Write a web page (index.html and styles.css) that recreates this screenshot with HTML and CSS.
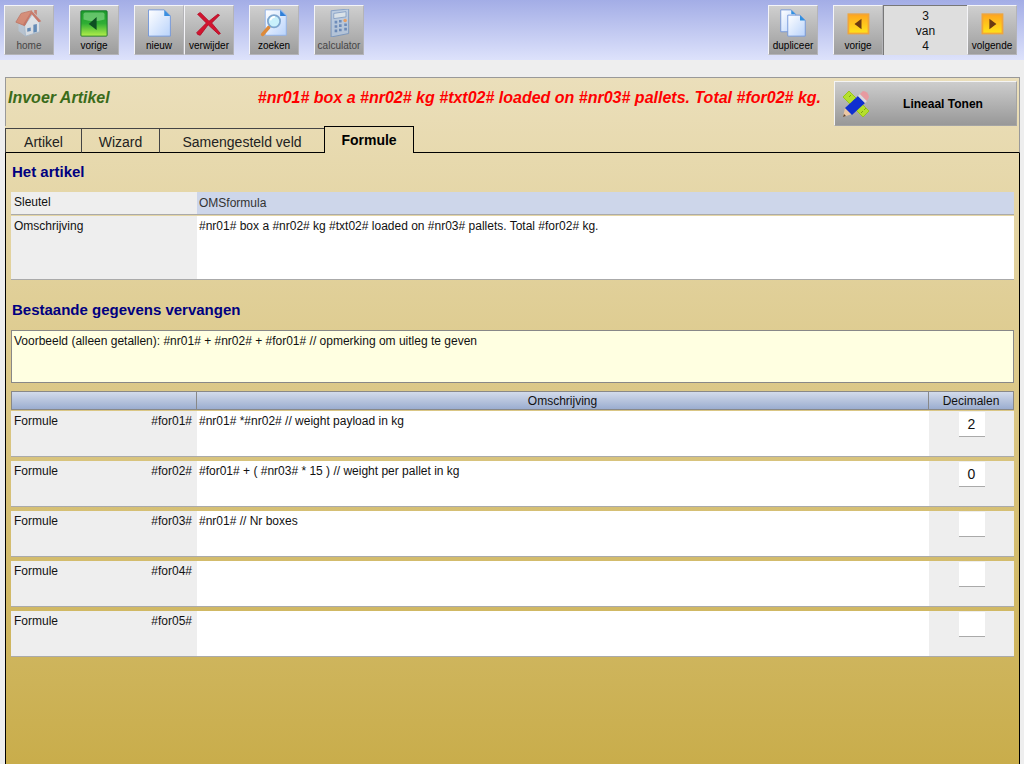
FILE: index.html
```html
<!DOCTYPE html>
<html lang="nl">
<head>
    <meta charset="UTF-8">
    <meta name="viewport" content="width=device-width, initial-scale=1.0">
    <title>Invoer Artikel</title>
    <link rel="stylesheet" href="styles.css">
</head>
<body>
    <header class="toolbar">
        <button type="button" class="tool" disabled>
            <svg viewBox="0 0 32 32">
                <path d="M4 15v10l8 6V18z" fill="#b9cde2"/>
                <path d="M11 19l9-13 8 9v11l-16 5z" fill="#f2f8ff" stroke="#9fbbd8"/>
                <path d="M1 15L7 5l12-3-8 17z" fill="#e06a48" stroke="#bb4a30"/>
                <path d="M19 2l11 12-3 1-8-9-8 13-2-1z" fill="#c94a30"/>
                <path d="M22 1h3v6l-3-3z" fill="#c8523a"/>
                <path d="M14 22l4-1v4l-4 1zM21 18l4-1v9l-4 1z" fill="#2f6fb6"/>
            </svg>
            <span>home</span>
        </button>
        <button type="button" class="tool gap">
            <svg viewBox="0 0 32 32">
                <defs>
                    <linearGradient id="green" x1="0" y1="0" x2="0" y2="1">
                        <stop offset="0" stop-color="#1d9a2c"/>
                        <stop offset="0.5" stop-color="#2fae34"/>
                        <stop offset="1" stop-color="#b4f04a"/>
                    </linearGradient>
                </defs>
                <rect x="1" y="2" width="30" height="29" rx="1" fill="url(#green)" stroke="#16702a"/>
                <path d="M4 6q0-2 2-2h20q2 0 2 2v6q-12 4-24 0z" fill="#8edb90" opacity="0.6"/>
                <path d="M19 9v15l-9-7z" fill="#0d4f22"/>
            </svg>
            <span>vorige</span>
        </button>
        <button type="button" class="tool gap">
            <svg viewBox="0 0 32 32">
                <defs>
                    <linearGradient id="paper" x1="0" y1="0" x2="1" y2="1">
                        <stop offset="0" stop-color="#ffffff"/>
                        <stop offset="1" stop-color="#b9d3fb"/>
                    </linearGradient>
                </defs>
                <path d="M4 1h18l7 7v23H4z" fill="url(#paper)" stroke="#6f93d8"/>
                <path d="M22 1v7h7z" fill="#3a8fe0"/>
            </svg>
            <span>nieuw</span>
        </button>
        <button type="button" class="tool">
            <svg viewBox="0 0 32 32">
                <path d="M3 6l3-2 10 10 10-8 2 1-9 9 10 12-2 1-12-11L6 30l-3-1-1-2 11-11z" fill="#d3142f" stroke="#b00d26" stroke-linejoin="round"/>
            </svg>
            <span>verwijder</span>
        </button>
        <button type="button" class="tool gap">
            <svg viewBox="0 0 32 32">
                <path d="M6 1h18l6 6v23H6z" fill="url(#paper)" stroke="#8fb2ea"/>
                <path d="M23 1v7h7z" fill="#2f7fd8"/>
                <path d="M3 29l7-8" stroke="#dd8a3a" stroke-width="4" stroke-linecap="round"/>
                <circle cx="16" cy="14" r="7" fill="#c9f0fb" stroke="#7fa6cf" stroke-width="2"/>
                <path d="M12 13q1-4 5-4" fill="none" stroke="#fff" stroke-width="2"/>
            </svg>
            <span>zoeken</span>
        </button>
        <button type="button" class="tool gap" disabled>
            <svg viewBox="0 0 32 32">
                <path d="M7 2l20-2v28L7 32z" fill="#b5cff0" stroke="#4f7fc2"/>
                <path d="M10 5l14-2v6l-14 2z" fill="#e6f4ff" stroke="#5b87c4"/>
                <path d="M11 15h3M16 14h3M11 20h3M16 19h3M22 18h3M11 25h3M16 24h3M22 23h3" stroke="#3a6cb8" stroke-width="3"/>
                <circle cx="23" cy="13" r="2" fill="#ff8a2a"/>
            </svg>
            <span>calculator</span>
        </button>
        <button type="button" class="tool right">
            <svg viewBox="0 0 32 32">
                <path d="M2 1h12l5 5v20H2z" fill="url(#paper)" stroke="#6f93d8"/>
                <path d="M14 1v5h5z" fill="#2f8fe0"/>
                <path d="M10 7h14l6 6v18H10z" fill="url(#paper)" stroke="#6f93d8"/>
                <path d="M24 7v6h6z" fill="#2f8fe0"/>
            </svg>
            <span>dupliceer</span>
        </button>
        <button type="button" class="tool gap">
            <svg viewBox="0 0 32 32">
                <defs>
                    <linearGradient id="yellow" x1="0" y1="0" x2="0" y2="1">
                        <stop offset="0" stop-color="#ffa51e"/>
                        <stop offset="1" stop-color="#ffe41a"/>
                    </linearGradient>
                </defs>
                <rect x="5" y="6" width="23" height="22" fill="url(#yellow)" stroke="#f0a53a" stroke-width="2"/>
                <path d="M20 11v12l-8-6z" fill="#6b3a12"/>
            </svg>
            <span>vorige</span>
        </button>
        <div class="counter">3<br>van<br>4</div>
        <button type="button" class="tool">
            <svg viewBox="0 0 32 32">
                <rect x="5" y="6" width="23" height="22" fill="url(#yellow)" stroke="#f0a53a" stroke-width="2"/>
                <path d="M13 11v12l8-6z" fill="#6b3a12"/>
            </svg>
            <span>volgende</span>
        </button>
    </header>

    <main class="panel">
        <div class="panel-head">
            <h1>Invoer Artikel</h1>
            <p class="preview">#nr01# box a #nr02# kg #txt02# loaded on #nr03# pallets. Total #for02# kg.</p>
            <button type="button" class="ruler">
                <svg viewBox="0 0 28 28">
                    <path d="M1 7l6-6 20 20-6 6z" fill="#b5e02c" stroke="#98c41c"/>
                    <path d="M7 7l2-2M11 11l2-2M19 23l2-2M22 20l2-2" stroke="#7ba511"/>
                    <path d="M1 27l2-9 7 6z" fill="#ecc7a4"/>
                    <path d="M1 27l1-3 2 2z" fill="#5a4636"/>
                    <path d="M3 18L16 6l7 7L10 25z" fill="#0f2fd0"/>
                    <path d="M16 6l2-2 7 7-2 2z" fill="#d9d9dd"/>
                    <path d="M18 4l3-3q5 0 6 6l-2 4z" fill="#e79aa0"/>
                </svg>
                <span>Lineaal Tonen</span>
            </button>
        </div>

        <nav class="tabs">
            <a href="#artikel" class="tab artikel">Artikel</a>
            <a href="#wizard" class="tab wizard">Wizard</a>
            <a href="#samengesteld" class="tab samengesteld">Samengesteld veld</a>
            <a href="#formule" class="tab active">Formule</a>
            <div class="tabs-rest"></div>
        </nav>

        <form class="content" id="formule">
            <h2>Het artikel</h2>
            <div class="field">
                <label for="sleutel">Sleutel</label>
                <input type="text" id="sleutel" value="OMSformula" readonly>
            </div>
            <div class="field">
                <label for="omschrijving">Omschrijving</label>
                <textarea id="omschrijving">#nr01# box a #nr02# kg #txt02# loaded on #nr03# pallets. Total #for02# kg.</textarea>
            </div>

            <h2 class="second">Bestaande gegevens vervangen</h2>
            <p class="example">Voorbeeld (alleen getallen): #nr01# + #nr02# + #for01# // opmerking om uitleg te geven</p>

            <table class="formulas">
                <thead>
                    <tr>
                        <th class="col-name"></th>
                        <th>Omschrijving</th>
                        <th class="col-dec">Decimalen</th>
                    </tr>
                </thead>
                <tbody>
                    <tr>
                        <td class="name"><label for="for01">Formule <span>#for01#</span></label></td>
                        <td class="text"><textarea id="for01">#nr01# *#nr02# // weight payload in kg</textarea></td>
                        <td class="dec"><input type="text" aria-label="Decimalen #for01#" value="2"></td>
                    </tr>
                    <tr>
                        <td class="name"><label for="for02">Formule <span>#for02#</span></label></td>
                        <td class="text"><textarea id="for02">#for01# + ( #nr03# * 15 ) // weight per pallet in kg</textarea></td>
                        <td class="dec"><input type="text" aria-label="Decimalen #for02#" value="0"></td>
                    </tr>
                    <tr>
                        <td class="name"><label for="for03">Formule <span>#for03#</span></label></td>
                        <td class="text"><textarea id="for03">#nr01# // Nr boxes</textarea></td>
                        <td class="dec"><input type="text" aria-label="Decimalen #for03#"></td>
                    </tr>
                    <tr>
                        <td class="name"><label for="for04">Formule <span>#for04#</span></label></td>
                        <td class="text"><textarea id="for04"></textarea></td>
                        <td class="dec"><input type="text" aria-label="Decimalen #for04#"></td>
                    </tr>
                    <tr>
                        <td class="name"><label for="for05">Formule <span>#for05#</span></label></td>
                        <td class="text"><textarea id="for05"></textarea></td>
                        <td class="dec"><input type="text" aria-label="Decimalen #for05#"></td>
                    </tr>
                </tbody>
            </table>
        </form>
    </main>
</body>
</html>
```

FILE: styles.css
```css
* {
    box-sizing: border-box;
}
body {
    font-family: "Liberation Sans", Arial, sans-serif;
    font-size: 12px;
    line-height: 14px;
    color: #111;
    background-color: #eee;
    margin: 0;
    min-height: 100vh;
    display: flex;
    flex-direction: column;
}
h1, h2, p {
    margin: 0;
}
button, input, textarea {
    font: inherit;
    color: inherit;
}

/* toolbar */
.toolbar {
    display: flex;
    height: 60px;
    padding: 5px 7px 5px 4px;
    background: linear-gradient(#a3ade6, #dde2fb);
}
.tool {
    width: 50px;
    height: 50px;
    padding: 3px 0 0;
    border: 1px solid #b4b4b8;
    border-top-color: #f4f4f8;
    border-left-color: #f4f4f8;
    background: linear-gradient(#cfcfcf, #9d9d9d);
    display: flex;
    flex-direction: column;
    align-items: center;
    font-size: 10px;
    line-height: 12px;
    color: #000;
}
.tool svg {
    width: 28px;
    height: 28px;
    flex: none;
}
.tool span {
    margin-top: 3px;
}
.tool:disabled svg,
.tool:disabled span {
    opacity: 0.6;
}
.gap {
    margin-left: 15px;
}
.right {
    margin-left: auto;
}
.counter {
    width: 84px;
    background: #dedede;
    border-top: 1px solid #777;
    border-left: 1px solid #777;
    padding-top: 3px;
    text-align: center;
    line-height: 15px;
}

/* panel */
.panel {
    flex: 1;
    margin: 17px 4px 0 5px;
    display: flex;
    flex-direction: column;
    background: linear-gradient(#ebdfbb, #c9ad4b);
}
.panel-head {
    display: flex;
    align-items: flex-start;
    height: 49px;
    padding: 3px 2px 0;
    border: 1px solid #999;
    border-bottom: 0;
}
h1, .preview {
    font-size: 16px;
    line-height: 18px;
    font-weight: bold;
    font-style: italic;
    padding-top: 8px;
}
h1 {
    color: #3a6b1a;
}
.preview {
    flex: 1;
    text-align: right;
    padding-right: 13px;
    color: #f00;
}
.ruler {
    width: 183px;
    height: 45px;
    padding: 0 0 0 7px;
    border: 1px solid #a4a4a4;
    border-top-color: #f4f4f4;
    border-left-color: #f4f4f4;
    background: linear-gradient(#cdcdcd, #989898);
    display: flex;
    align-items: center;
    font-weight: bold;
    color: #000;
}
.ruler svg {
    width: 28px;
    height: 28px;
}
.ruler span {
    flex: 1;
    text-align: center;
}

/* tabs */
.tabs {
    display: flex;
    align-items: flex-end;
    height: 27px;
}
.tab {
    height: 25px;
    border: 1px solid #444;
    border-right: 0;
    border-bottom-color: #000;
    font-size: 14px;
    line-height: 26px;
    text-align: center;
    color: #222;
    text-decoration: none;
}
.artikel {
    width: 76px;
}
.wizard {
    width: 78px;
}
.samengesteld {
    width: 165px;
}
.active {
    width: 90px;
    height: 27px;
    border: 1px solid #000;
    border-bottom: 0;
    font-weight: bold;
    color: #000;
}
.tabs-rest {
    flex: 1;
    align-self: stretch;
    border-right: 1px solid #999;
    border-bottom: 1px solid #000;
}

/* content */
.content {
    flex: 1;
    padding: 10px 5px 0;
    border: 1px solid #000;
    border-top: 0;
    border-bottom: 0;
}
h2 {
    font-size: 15px;
    line-height: 18px;
    color: #000080;
    padding-left: 1px;
    margin-bottom: 11px;
}
.second {
    margin-top: 21px;
}
.field {
    display: flex;
    background: #eee;
    border-bottom: 1px solid #aaa;
}
.field + .field {
    margin-top: 1px;
}
.field label {
    width: 186px;
    padding: 3px;
}
.field input,
.field textarea {
    flex: 1;
    min-width: 0;
    border: 0;
    padding: 3px 2px;
}
.field input {
    height: 22px;
    background: #cdd6ea;
    color: #333;
}
textarea {
    display: block;
    background: #fff;
    resize: none;
    border: 0;
}
.field textarea {
    height: 63px;
}
.example {
    height: 53px;
    padding: 3px 2px;
    border: 1px solid #888;
    background: #ffffe1;
    margin-bottom: 8px;
}

/* formulas */
.formulas {
    width: 100%;
    table-layout: fixed;
    border-spacing: 0;
}
.formulas th {
    height: 19px;
    padding: 1px 0 0;
    border: 1px solid #888;
    border-left-width: 0;
    background: linear-gradient(#d3dbea, #9badd0);
    font-weight: normal;
}
.formulas .col-name {
    width: 186px;
    border-left-width: 1px;
}
.formulas .col-dec {
    width: 85px;
}
.formulas td {
    height: 50px;
    padding: 0;
    vertical-align: top;
    background: #eee;
    background-clip: padding-box;
    border-top: 4px solid transparent;
    box-shadow: inset 0 -1px #aaa;
}
.formulas tbody tr:first-child td {
    height: 47px;
    border-top-width: 1px;
}
.name label {
    display: flex;
    justify-content: space-between;
    padding: 3px 5px 0 3px;
}
.text textarea {
    width: 100%;
    height: 45px;
    padding: 3px 2px;
}
.dec input {
    display: block;
    width: 26px;
    height: 25px;
    margin: 1px auto 0;
    padding: 0;
    border: 0;
    border-bottom: 1px solid #aaa;
    background: #fff;
    font-size: 14px;
    text-align: center;
}
.formulas th, .dec input {
    line-height: 16px;
}
```
